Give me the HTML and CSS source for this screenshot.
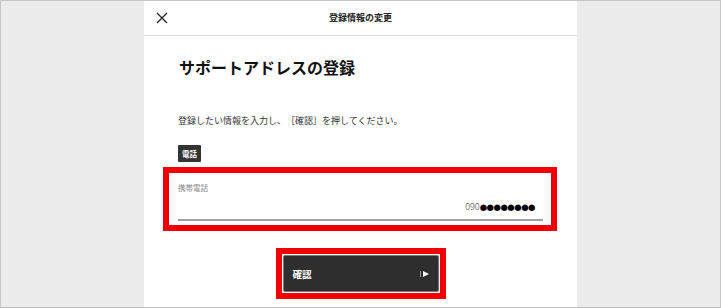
FILE: index.html
```html
<!DOCTYPE html>
<html lang="ja">
<head>
<meta charset="utf-8">
<title>登録情報の変更</title>
<link rel="stylesheet" href="styles.css">
</head>
<body>
<div class="frame">
  <div class="panel">
    <header class="header">
      <svg class="close" width="12" height="12" viewBox="0 0 12 12"><path d="M1 1L11 11M11 1L1 11" stroke="#222" stroke-width="1.3" fill="none"/></svg>
      <div class="title">登録情報の変更</div>
    </header>
    <main class="content">
      <h1 class="heading">サポートアドレスの登録</h1>
      <p class="lead">登録したい情報を入力し、［確認］を押してください。</p>
      <div class="badge">電話</div>
      <div class="mark field-mark">
        <div class="field">
          <div class="label">携帯電話</div>
          <div class="value"><span class="num">090</span><span class="dots">●●●●●●●●</span></div>
        </div>
      </div>
      <div class="btn-row">
        <div class="mark btn-mark">
          <button class="btn"><span>確認</span><span class="arrow"><i class="bar"></i><i class="tri"></i></span></button>
        </div>
      </div>
    </main>
  </div>
</div>
</body>
</html>
```
FILE: styles.css
```css
html, body { margin: 0; padding: 0; }
body {
  font-family: "Noto Sans CJK JP", "Noto Sans", sans-serif;
  color: #333;
  background: #ececec;
  text-spacing-trim: space-all;
}
.frame {
  box-sizing: border-box;
  width: 721px;
  height: 308px;
  border: 1px solid #c6c6c6;
  border-bottom-color: #bdbdbd;
  overflow: hidden;
  background: #ececec;
}
.panel {
  width: 433px;
  margin: 0 auto;
  height: 100%;
  background: #fff;
}
.header {
  height: 34px;
  border-bottom: 1px solid #dcdcdc;
  display: flex;
  align-items: center;
  position: relative;
}
.close {
  position: absolute;
  left: 12px;
  top: 11px;
}
.title {
  flex: 1;
  text-align: center;
  font-size: 9px;
  font-weight: 700;
  color: #222;
  line-height: 12px;
}
.content {
  padding: 0 35px;
  display: flex;
  flex-direction: column;
  align-items: flex-start;
}
.heading {
  margin: 21px 0 0;
  font-size: 16px;
  line-height: 20px;
  font-weight: 700;
  color: #111;
}
.lead {
  margin: 38px 0 0 -1px;
  font-size: 9px;
  line-height: 12px;
  color: #333;
  text-spacing-trim: space-all;
}
.badge {
  margin: 18px 0 0 -1px;
  background: #333;
  color: #fff;
  font-size: 7.5px;
  font-weight: 700;
  height: 17px;
  line-height: 17px;
  padding: 0 4px;
  border-radius: 1px;
}
.mark {
  border: 6px solid #f00000;
  box-sizing: border-box;
}
.field-mark {
  margin: 5px -15px 0 -16px;
  align-self: stretch;
  padding: 10px 8px 4px 9px;
}
.field {
  border-bottom: 2px solid #a0a0a0;
  padding-bottom: 7px;
}
.label {
  font-size: 7.5px;
  line-height: 10px;
  color: #888;
}
.value {
  margin-top: 5px;
  line-height: 10px;
  text-align: right;
  padding-right: 8px;
  white-space: nowrap;
}
.num {
  font-size: 9px;
  color: #444;
  font-weight: 300;
}
.dots {
  font-family: "DejaVu Sans", sans-serif;
  font-size: 8.5px;
  color: #000;
  letter-spacing: -0.5px;
}
.btn-row {
  align-self: stretch;
  display: flex;
  justify-content: center;
  margin-top: 17px;
}
.btn-mark {
  padding: 1px;
}
.btn {
  display: flex;
  align-items: center;
  justify-content: space-between;
  width: 156px;
  height: 37px;
  box-sizing: border-box;
  background: #2e2e2e;
  border: 1px solid #777;
  border-radius: 2px;
  color: #fff;
  font-family: "Noto Sans CJK JP", sans-serif;
  font-size: 9.5px;
  font-weight: 700;
  padding: 0 9px 0 9px;
}
.arrow {
  display: flex;
  align-items: center;
  gap: 2px;
}
.bar {
  display: block;
  width: 1px;
  height: 6px;
  background: #999;
}
.tri {
  display: block;
  width: 0;
  height: 0;
  border-top: 3px solid transparent;
  border-bottom: 3px solid transparent;
  border-left: 6px solid #fff;
}
```
